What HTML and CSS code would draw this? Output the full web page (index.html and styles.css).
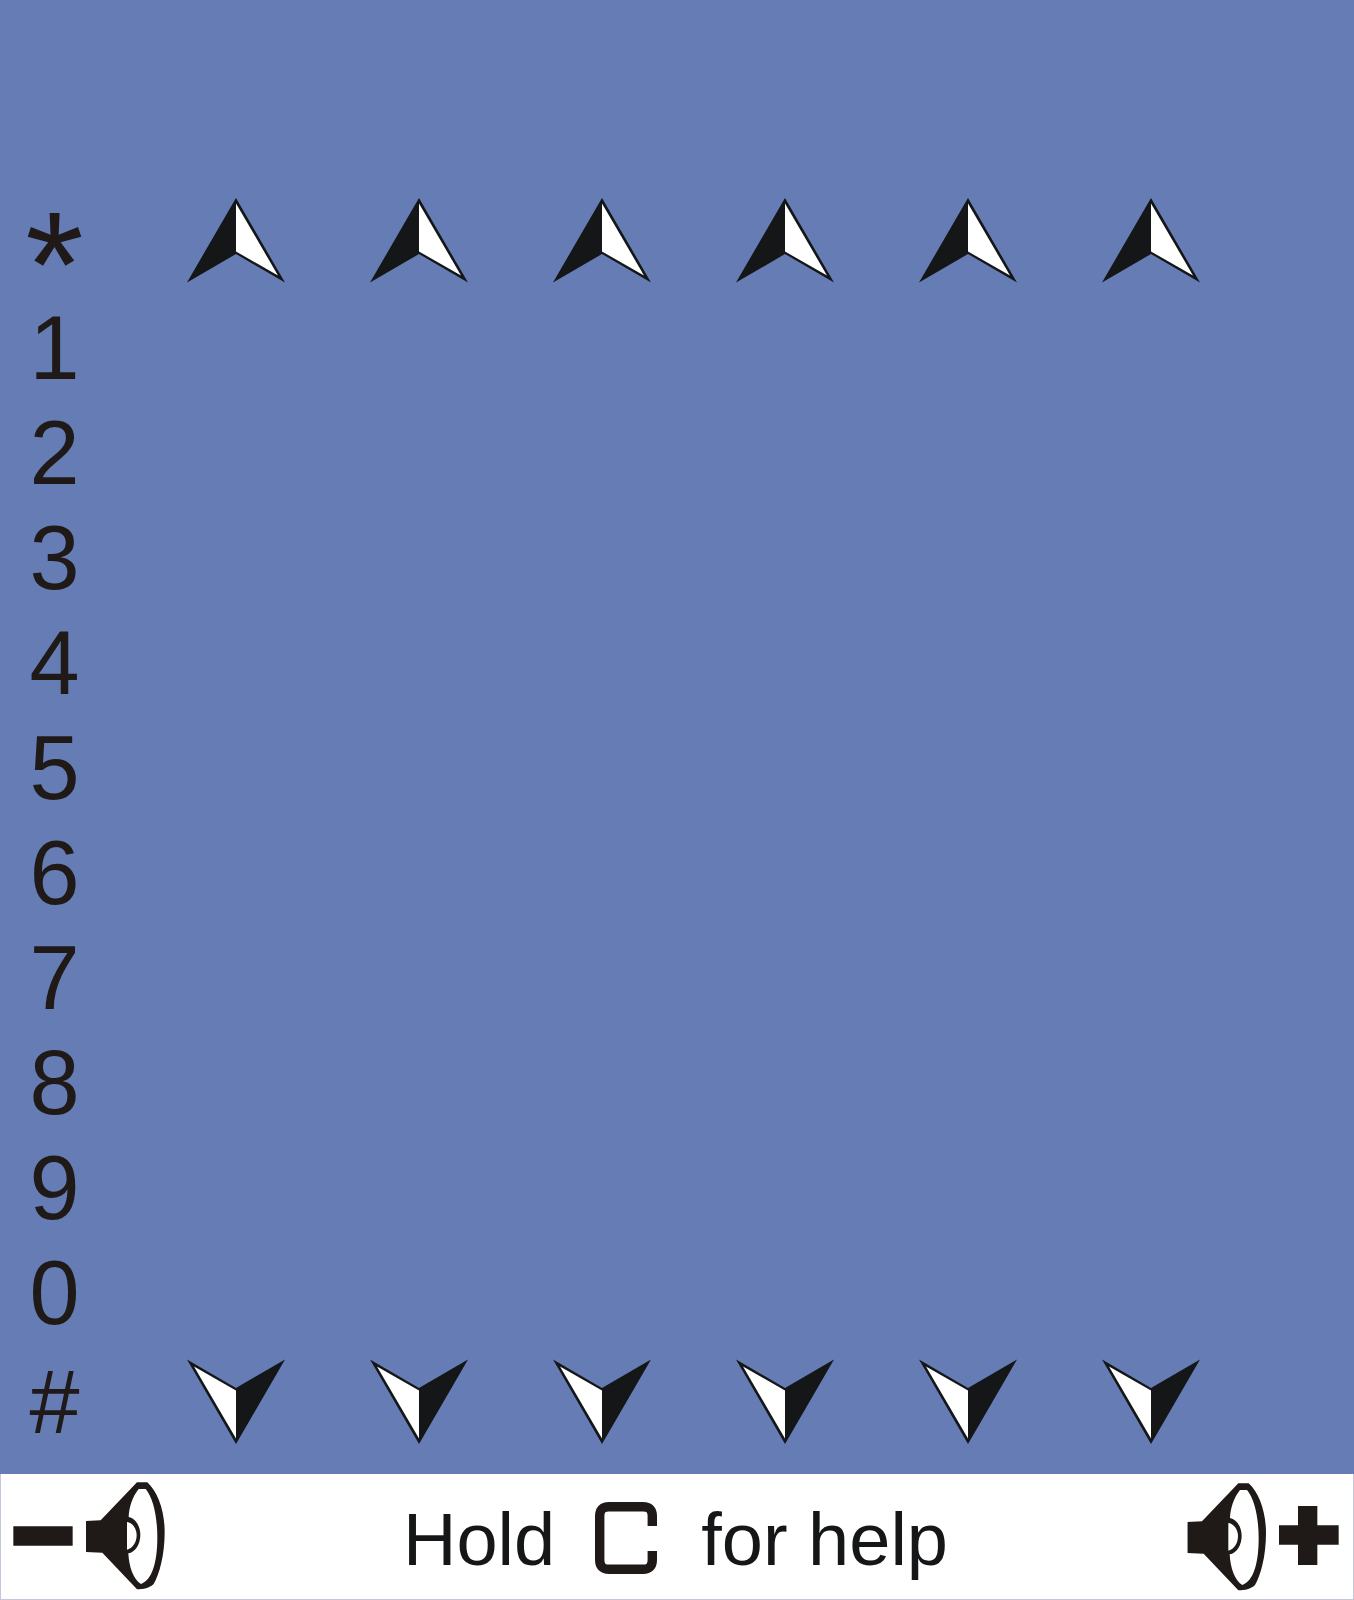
FILE: index.html
```
<!DOCTYPE html>
<html lang="en">
<head>
<meta charset="utf-8">
<meta name="viewport" content="width=device-width, initial-scale=1">
<title>Keypad</title>
<link rel="stylesheet" href="styles.css">
</head>
<body>
<svg class="defs" width="0" height="0" aria-hidden="true">
  <symbol id="arrow" viewBox="0 0 100 86">
    <path d="M50 1L99 85.500L50 57L1 85.500Z" fill="#141617"/>
    <path d="M50 6.500L92 78.500L50 54.500Z" fill="#fff"/>
  </symbol>
  <symbol id="speaker" viewBox="0 0 240 324">
    <path fill-rule="evenodd" fill="#1f1a17" d="M0 117L44 115L153 1H184C216 30 236 88 236 150C236 220 220 277 203 306C190 318 172 322 153 322L49 212L0 210ZM158 21C140 43 129 75 128 105C148 109 163 132 163 158C163 187 148 210 127 214C129 255 143 294 165 306C199 294 214 240 214 166C214 105 202 48 179 21ZM123 120V203C139 200 152 182 152 159C152 139 139 122 123 120Z"/>
  </symbol>
</svg>
<main class="screen">
  <div class="keys">
    <div class="row row-end">
      <button class="key key-star">*</button>
      <div class="arrows">
        <button aria-label="Column 1 up"><svg><use href="#arrow"/></svg></button>
        <button aria-label="Column 2 up"><svg><use href="#arrow"/></svg></button>
        <button aria-label="Column 3 up"><svg><use href="#arrow"/></svg></button>
        <button aria-label="Column 4 up"><svg><use href="#arrow"/></svg></button>
        <button aria-label="Column 5 up"><svg><use href="#arrow"/></svg></button>
        <button aria-label="Column 6 up"><svg><use href="#arrow"/></svg></button>
      </div>
    </div>
    <div class="row"><button class="key">1</button></div>
    <div class="row"><button class="key">2</button></div>
    <div class="row"><button class="key">3</button></div>
    <div class="row"><button class="key">4</button></div>
    <div class="row"><button class="key">5</button></div>
    <div class="row"><button class="key">6</button></div>
    <div class="row"><button class="key">7</button></div>
    <div class="row"><button class="key">8</button></div>
    <div class="row"><button class="key">9</button></div>
    <div class="row"><button class="key">0</button></div>
    <div class="row row-end">
      <button class="key">#</button>
      <div class="arrows arrows-down">
        <button aria-label="Column 1 down"><svg><use href="#arrow"/></svg></button>
        <button aria-label="Column 2 down"><svg><use href="#arrow"/></svg></button>
        <button aria-label="Column 3 down"><svg><use href="#arrow"/></svg></button>
        <button aria-label="Column 4 down"><svg><use href="#arrow"/></svg></button>
        <button aria-label="Column 5 down"><svg><use href="#arrow"/></svg></button>
        <button aria-label="Column 6 down"><svg><use href="#arrow"/></svg></button>
      </div>
    </div>
  </div>
  <footer class="bar">
    <button class="volume" aria-label="Volume down">
      <svg viewBox="36 63 468 330">
        <path d="M40 199H218V257H40Z" fill="#1f1a17"/>
        <use href="#speaker" x="258" y="66" width="240" height="324"/>
      </svg>
    </button>
    <p class="hint">
      <span>Hold</span>
      <svg class="clear" viewBox="0 0 62 72" role="img" aria-label="C"><path d="M57.300 24V14Q57.300 4.700 48 4.700H14Q4.700 4.700 4.700 14V58Q4.700 67.300 14 67.300H48Q57.300 67.300 57.300 58V49" fill="none" stroke="#1f1a17" stroke-width="9.400"/></svg>
      <span>for help</span>
    </p>
    <button class="volume" aria-label="Volume up">
      <svg viewBox="45 63 468 330">
        <use href="#speaker" x="52" y="69" width="240" height="324"/>
        <path d="M384 138H442V196H506V254H442V315H384V254H327V196H384Z" fill="#1f1a17"/>
      </svg>
    </button>
  </footer>
</main>
</body>
</html>
```
FILE: styles.css
```
* {
  box-sizing: border-box;
}

body {
  margin: 0;
  background: #657cb4;
  font-family: "Liberation Sans", Arial, sans-serif;
  color: #1f1a17;
}

button {
  margin: 0;
  padding: 0;
  border: 0;
  background: none;
  color: inherit;
  font: inherit;
  cursor: pointer;
}

svg {
  display: block;
}

.defs {
  position: absolute;
}

.screen {
  display: flex;
  flex-direction: column;
  min-height: 100vh;
}

.keys {
  flex: 1;
  padding: 184px 0 16px;
}

.row {
  display: flex;
  align-items: center;
  height: 105px;
}

.row-end {
  height: 112px;
}

.key {
  width: 109px;
  font-size: 90px;
  line-height: 105px;
  text-align: center;
}

.key-star {
  height: 112px;
  font-size: 150px;
  line-height: 162px;
}

.arrows {
  flex: 1;
  display: grid;
  grid-template-columns: repeat(6, 1fr);
  margin: 0 112px 0 36px;
}

.arrows button {
  display: flex;
  justify-content: center;
}

.arrows svg {
  width: 100px;
  height: 86px;
}

.arrows-down svg {
  transform: rotate(180deg);
}

.bar {
  display: flex;
  align-items: center;
  justify-content: space-between;
  height: 126px;
  padding: 0 12px 2px 11px;
  border: 1px solid #c6c5dc;
  border-top: 0;
  background: #fff;
}

.volume svg {
  width: 156px;
  height: 110px;
}

.hint {
  display: flex;
  align-items: center;
  gap: 40px;
  margin: 0;
  padding: 4px 2px 0 0;
  color: #141617;
  font-size: 74px;
  line-height: 86px;
}

.hint span {
  padding-top: 4px;
}

.clear {
  width: 62px;
  height: 72px;
  margin-right: 4px;
}
```
